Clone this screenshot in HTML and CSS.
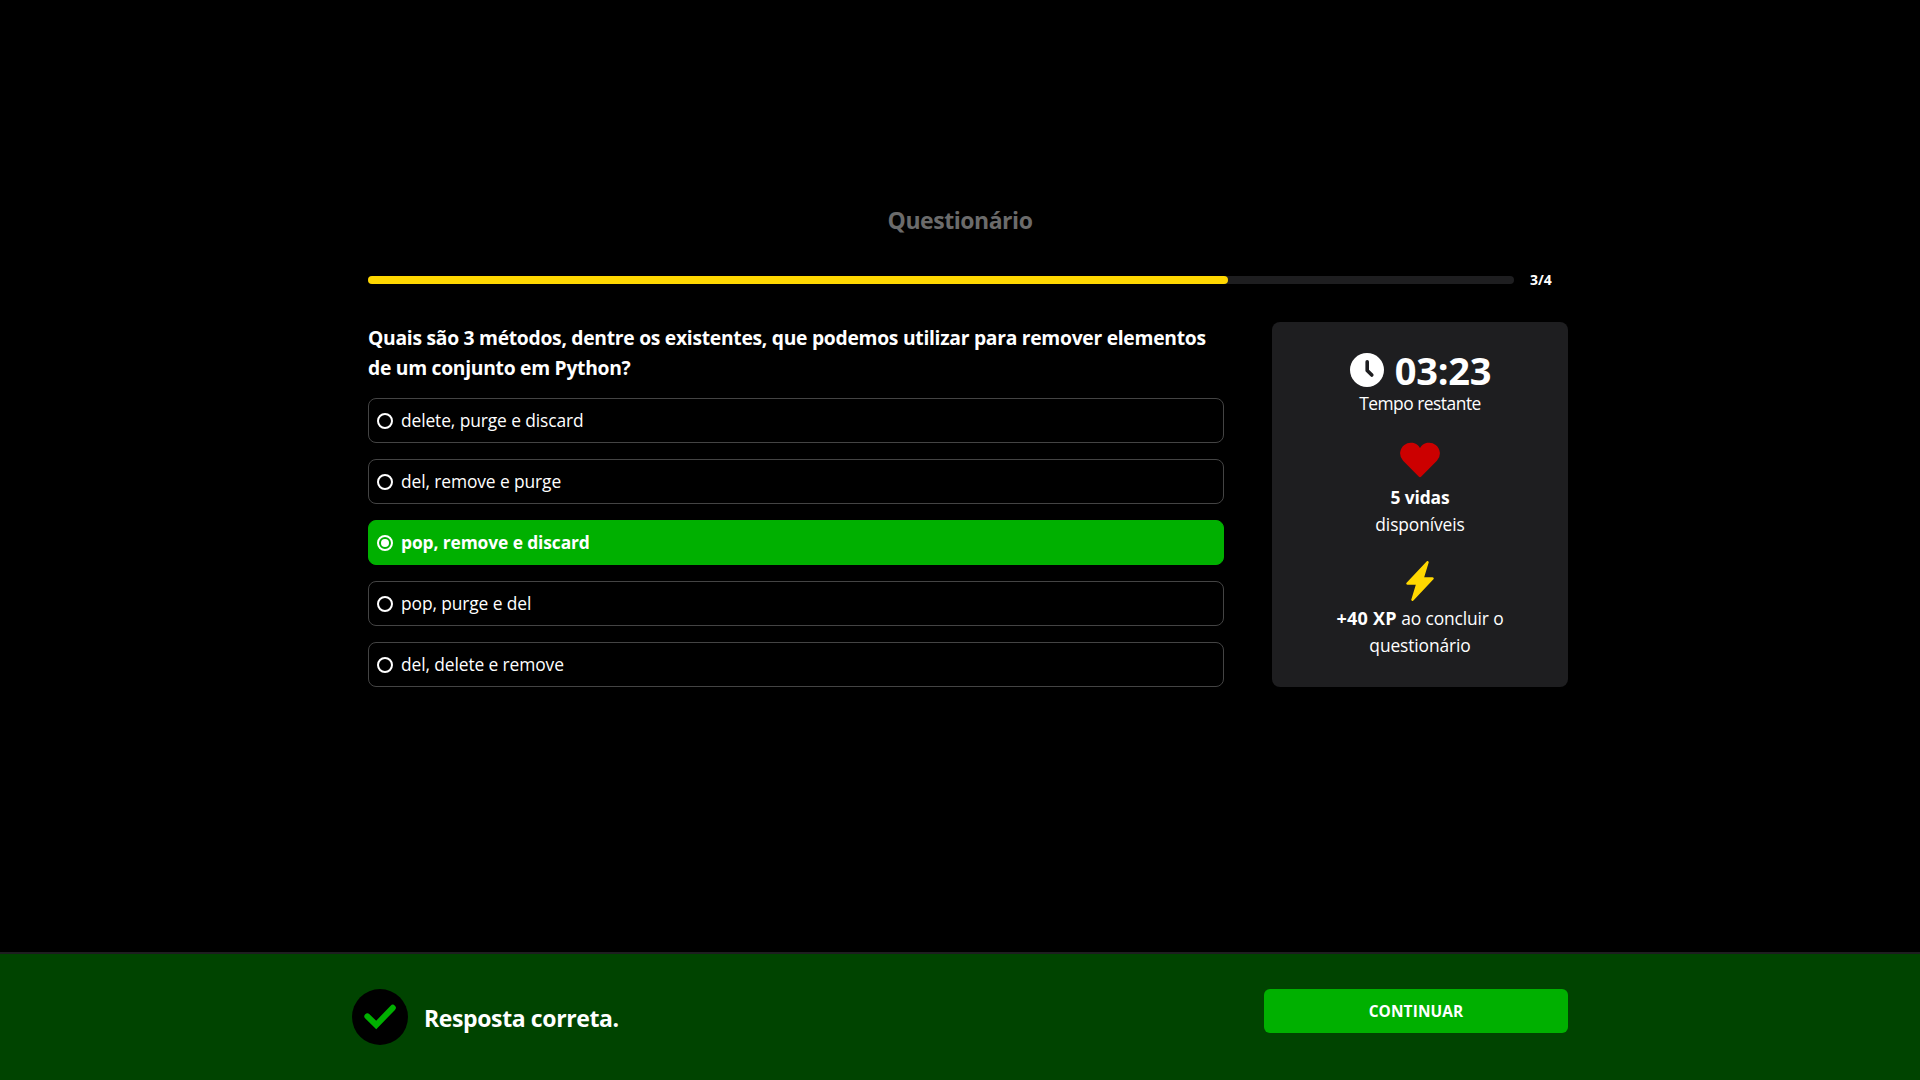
FILE: index.html
```
<!DOCTYPE html>
<html lang="pt-BR">
<head>
<meta charset="utf-8">
<title>Questionário</title>
<link rel="stylesheet" href="styles.css">
</head>
<body>
<div class="page">
  <h1 class="quiz-title">Questionário</h1>
  <main class="quiz">
    <div class="progress">
      <div class="progress-track"><div class="progress-fill" style="width: 75%"></div></div>
      <span class="progress-count">3/4</span>
    </div>
    <div class="quiz-body">
      <section class="question">
        <h2 class="question-text">Quais são 3 métodos, dentre os existentes, que podemos utilizar para remover elementos<br>de um conjunto em Python?</h2>
        <ul class="options">
          <li class="option"><span class="radio"></span><span>delete, purge e discard</span></li>
          <li class="option"><span class="radio"></span><span>del, remove e purge</span></li>
          <li class="option selected"><span class="radio"></span><span>pop, remove e discard</span></li>
          <li class="option"><span class="radio"></span><span>pop, purge e del</span></li>
          <li class="option"><span class="radio"></span><span>del, delete e remove</span></li>
        </ul>
      </section>
      <aside class="status">
        <div class="time">
          <svg class="clock-icon" width="34" height="34" viewBox="0 0 34 34"><circle cx="17" cy="17" r="17" fill="#fff"/><path d="M17.2 8.8v8.7l4.6 4.6" fill="none" stroke="#1e1e20" stroke-width="3.6" stroke-linecap="round" stroke-linejoin="round"/></svg>
          <span>03:23</span>
        </div>
        <p class="status-text time-label">Tempo restante</p>
        <svg class="status-icon heart-icon" width="40" height="40" viewBox="0 0 40 40"><path d="M20 7.9A10.7 10.7 0 1 0 3.1 20.8L18.7 36.5Q20 37.8 21.3 36.5L36.9 20.8A10.7 10.7 0 1 0 20 7.9Z" fill="#c00"/></svg>
        <p class="status-text"><strong>5 vidas</strong><br>disponíveis</p>
        <svg class="status-icon" width="40" height="40" viewBox="0 0 16 16"><path d="M11.251.068a.5.5 0 0 1 .227.58L9.677 6.5H13a.5.5 0 0 1 .364.843l-8 8.5a.5.5 0 0 1-.842-.49L6.323 9.5H3a.5.5 0 0 1-.364-.843l8-8.5a.5.5 0 0 1 .615-.09z" fill="#ffd700"/></svg>
        <p class="status-text"><strong class="xp">+40 XP</strong> ao concluir o<br>questionário</p>
      </aside>
    </div>
  </main>
  <footer class="feedback">
    <div class="feedback-inner">
      <div class="result">
        <svg width="56" height="56" viewBox="0 0 56 56"><circle cx="28" cy="28" r="28"/><path d="M15.4 27.4l8.8 8.6 16.6-17.2" fill="none" stroke="#00b000" stroke-width="6" stroke-linecap="round"/></svg>
        <span class="result-text">Resposta correta.</span>
      </div>
      <button class="continue" type="button">CONTINUAR</button>
    </div>
  </footer>
</div>
</body>
</html>
```
FILE: styles.css
```
* {
  box-sizing: border-box;
}

body {
  margin: 0;
  background: #000;
  color: #fff;
  font-family: "Open Sans", "Noto Sans", sans-serif;
}

h1, h2, p, ul {
  margin: 0;
  padding: 0;
}

.page {
  display: flex;
  flex-direction: column;
  height: 1080px;
  padding-top: 202px;
}

.quiz {
  flex: 1;
  width: 1216px;
  margin: 0 auto;
  padding-left: 16px;
}

.quiz-title {
  color: #6b6b6b;
  font-size: 23px;
  line-height: 36px;
  letter-spacing: -0.46px;
  text-align: center;
}

.progress {
  display: flex;
  align-items: center;
  gap: 16px;
  height: 20px;
  margin-top: 32px;
}

.progress-track {
  width: 1146px;
  height: 8px;
  border-radius: 4px;
  background: #1e1e20;
}

.progress-fill {
  height: 8px;
  border-radius: 4px;
  background: #ffd700;
}

.progress-count {
  font-size: 14px;
  font-weight: 700;
  line-height: 20px;
}

.quiz-body {
  display: flex;
  justify-content: space-between;
  height: 365px;
  margin-top: 32px;
}

.question {
  width: 856px;
}

.question-text {
  padding-top: 1px;
  font-size: 19.3px;
  line-height: 30px;
  letter-spacing: -0.28px;
  white-space: nowrap;
}

.options {
  display: flex;
  flex-direction: column;
  gap: 16px;
  margin-top: 15px;
  list-style: none;
}

.option {
  display: flex;
  align-items: center;
  gap: 8px;
  height: 45px;
  padding: 0 8px;
  border: 1px solid #444;
  border-radius: 8px;
  font-size: 17.4px;
  line-height: 27px;
  letter-spacing: -0.11px;
}

.selected {
  border-color: #00b000;
  background: #00b000;
  font-weight: 700;
}

.radio {
  display: flex;
  align-items: center;
  justify-content: center;
  width: 16px;
  height: 16px;
  border: 2px solid #fff;
  border-radius: 50%;
}

.selected .radio::after {
  content: "";
  width: 8px;
  height: 8px;
  border-radius: 50%;
  background: #fff;
}

.status {
  display: flex;
  flex-direction: column;
  align-items: center;
  width: 296px;
  padding-top: 28px;
  border-radius: 8px;
  background: #1e1e20;
  text-align: center;
}

.time {
  display: flex;
  align-items: center;
  gap: 11px;
  height: 40px;
  padding-left: 1px;
  font-size: 38px;
  font-weight: 700;
  line-height: 40px;
  letter-spacing: -0.25px;
}

.status-text {
  font-size: 17.4px;
  line-height: 27px;
  letter-spacing: -0.12px;
}

.time-label {
  letter-spacing: -0.5px;
}

.xp {
  font-size: 18px;
  line-height: 1;
  letter-spacing: 0.25px;
}

.status-icon {
  margin: 23px 0 4px;
}

.feedback {
  height: 128px;
  border-top: 2px solid #1e1e20;
  background: #004400;
}

.feedback-inner {
  display: flex;
  align-items: flex-start;
  justify-content: space-between;
  width: 1216px;
  margin: 0 auto;
  padding-top: 35px;
}

.result {
  display: flex;
  align-items: center;
  gap: 16px;
}

.result-text {
  padding-top: 2px;
  font-size: 23px;
  font-weight: 700;
  line-height: 32px;
  letter-spacing: -0.38px;
}

.continue {
  width: 304px;
  height: 44px;
  padding: 2px 0 0;
  border: 0;
  border-radius: 6px;
  background: #00b000;
  color: #fff;
  font: 700 15.4px/42px "Open Sans", "Noto Sans", sans-serif;
  letter-spacing: 0.13px;
}
```
